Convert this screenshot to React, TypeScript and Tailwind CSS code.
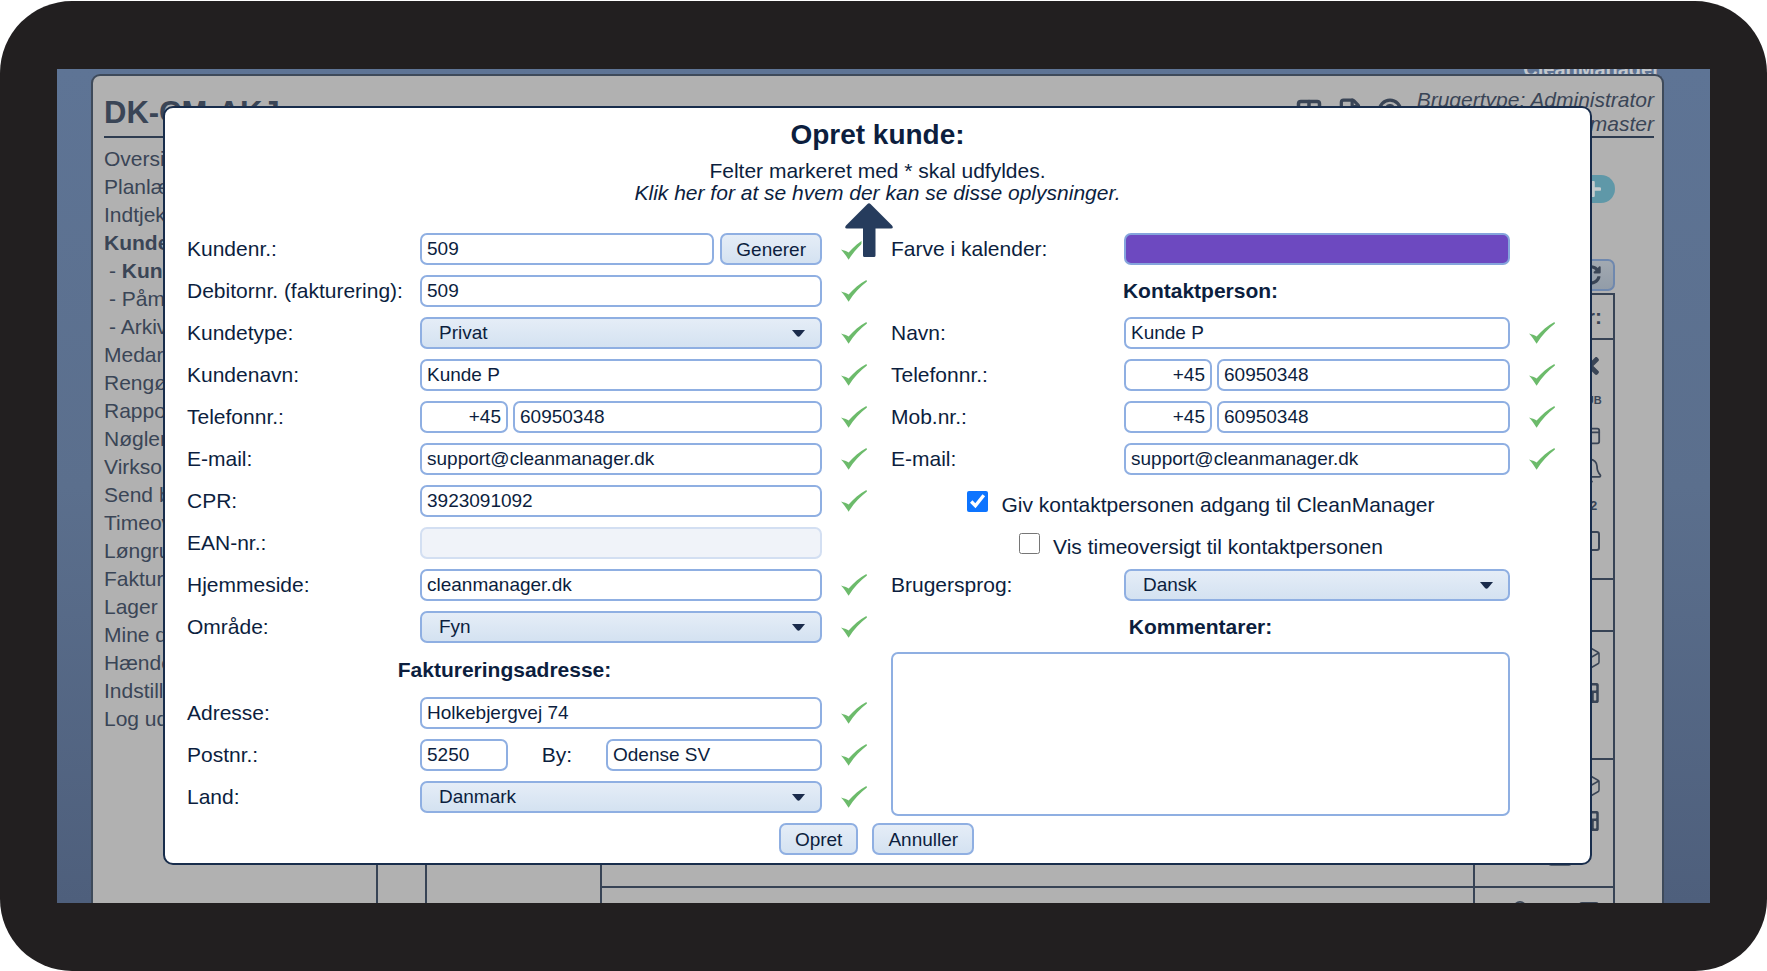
import React from "react";
import { Bell, Box, File, Table, CircleHelp, AppWindow, Square } from "lucide-react";
import { FaSyncAlt, FaTimes, FaCalculator } from "react-icons/fa";

const field =
  "h-8 min-w-0 rounded-[7px] border-2 border-[#8fafe2] bg-white px-[5px] text-[19px] text-[#0c1e3e] outline-none";
const buttonStyle =
  "h-8 shrink-0 rounded-[7px] border-2 border-[#8fafe2] bg-linear-to-b from-[#e5edf7] to-[#d4e2f1] px-[14px] text-[19px] leading-none text-[#0c1e3e]";

function CheckMark() {
  return (
    <svg viewBox="0 0 26 22" className="ml-[19px] h-[22px] w-[26px]" aria-hidden="true">
      <path d="M0 11.5C3 12.6 5.5 13 7.6 14.6C12.5 8.8 18.5 3.6 25.4 0L26 1.6C19 7 12.8 13.4 7.6 21.8C5.2 17.8 2.8 14.6 0 11.5Z" fill="#6cbb6b" />
    </svg>
  );
}

type RowProps = { label: string; id: string; check?: boolean; children: React.ReactNode };

function LeftRow({ label, id, check = true, children }: RowProps) {
  return (
    <div className="grid h-[42px] grid-cols-[233fr_402fr_69fr] items-center">
      <label htmlFor={id} className="whitespace-nowrap">{label}</label>
      <div className="flex min-w-0 items-center">{children}</div>
      {check && <CheckMark />}
    </div>
  );
}

function RightRow({ label, id, check = true, children }: RowProps) {
  return (
    <div className="grid h-[42px] grid-cols-[233fr_386fr_80fr] items-center">
      <label htmlFor={id} className="whitespace-nowrap">{label}</label>
      <div className="flex min-w-0 items-center">{children}</div>
      {check && <CheckMark />}
    </div>
  );
}

function TextField({ id, value }: { id: string; value: string }) {
  return <input id={id} type="text" defaultValue={value} className={`${field} w-full`} />;
}

function PhoneField({ id, name }: { id: string; name: string }) {
  return (
    <div className="flex w-full gap-[5px]">
      <input aria-label={`Landekode, ${name}`} type="text" defaultValue="+45" className={`${field} w-[88px] text-right`} />
      <input id={id} type="tel" defaultValue="60950348" className={`${field} flex-1`} />
    </div>
  );
}

function SelectField({ id, value }: { id: string; value: string }) {
  return (
    <div className="relative w-full">
      <select
        id={id}
        defaultValue={value}
        className="block h-8 w-full appearance-none rounded-[7px] border-2 border-[#8fafe2] bg-linear-to-b from-[#e5edf7] to-[#d4e2f1] pl-[17px] text-[19px] text-[#0c1e3e] outline-none"
      >
        <option>{value}</option>
      </select>
      <svg viewBox="0 0 13 7" className="pointer-events-none absolute top-[13px] right-[17px] h-[7px] w-[13px]" aria-hidden="true">
        <path d="M0 0H13L8 6Q6.500 7.500 5 6Z" fill="#1a2b4b" />
      </svg>
    </div>
  );
}

const menu = [
  "Oversigt", "Planlægning", "Indtjekning", "Kunder", "- Kunder", "- Påmindelser", "- Arkiv",
  "Medarbejdere", "Rengøring", "Rapporter", "Nøgler", "Virksomhed", "Send besked", "Timeoversigt",
  "Løngrundlag", "Fakturering", "Lager", "Mine data", "Hændelser", "Indstillinger", "Log ud",
];

function Sidebar() {
  return (
    <nav className="w-[272px] shrink-0 pt-[7px] text-[21px] leading-7">
      <ul>
        {menu.map((item, i) => (
          <li key={item} className={i === 3 ? "font-bold" : ""}>
            {item.startsWith("- ") ? (
              <a href="#" className="pl-[5px]">
                - <span className={i === 4 ? "font-bold" : ""}>{item.slice(2)}</span>
              </a>
            ) : (
              <a href="#">{item}</a>
            )}
          </li>
        ))}
      </ul>
    </nav>
  );
}

function IconSlot({ children }: { children: React.ReactNode }) {
  return <span className="flex h-[35px] w-7 items-center justify-center">{children}</span>;
}

function CustomerTable() {
  return (
    <div className="min-w-0 flex-1 pr-[47px]">
      <div className="flex h-[155px] flex-col items-end">
        <button aria-label="Tilføj" className="mt-[37px] flex h-7 w-11 shrink-0 items-center justify-center rounded-full bg-[#5f98a8]">
          <svg viewBox="0 0 16 16" className="h-4 w-4"><path d="M8 1.500V14.500M1.500 8H14.500" stroke="#c5cbcd" strokeWidth="3.600" strokeLinecap="round" /></svg>
        </button>
        <button aria-label="Opdater" className="mt-14 flex h-8 w-12 shrink-0 items-center justify-center rounded-[7px] border-2 border-[#6f88ae] bg-linear-to-b from-[#a2a9b1] to-[#929ca8]">
          <FaSyncAlt size={20} />
        </button>
      </div>
      <table className="w-full table-fixed border-collapse border-2 border-[#374355]">
        <colgroup>
          <col className="w-[49px]" />
          <col className="w-[175px]" />
          <col />
          <col className="w-[140px]" />
        </colgroup>
        <thead>
          <tr className="h-[45px]">
            <th className="border-2 border-[#374355]" />
            <th className="border-2 border-[#374355]" />
            <th className="border-2 border-[#374355]" />
            <th className="border-2 border-[#374355] pr-[11px] text-right text-[21px]">Funktioner:</th>
          </tr>
        </thead>
        <tbody>
          <tr className="h-[240px]">
            <td rowSpan={5} className="border-2 border-[#374355]" />
            <td rowSpan={5} className="border-2 border-[#374355]" />
            <td className="border-2 border-[#374355]" />
            <td className="border-2 border-[#374355] pt-2 pr-[9px] align-top">
              <div className="flex flex-col items-end">
                <IconSlot><FaTimes size={26} /></IconSlot>
                <IconSlot><span className="text-[11px] font-bold">SUB</span></IconSlot>
                <IconSlot><AppWindow size={22} strokeWidth={2} /></IconSlot>
                <IconSlot><Bell size={28} strokeWidth={1.5} /></IconSlot>
                <IconSlot><span className="text-[13px] font-bold">12</span></IconSlot>
                <IconSlot><Square size={24} strokeWidth={2} /></IconSlot>
              </div>
            </td>
          </tr>
          <tr className="h-[52px]">
            <td className="border-2 border-[#374355]" />
            <td className="border-2 border-[#374355]" />
          </tr>
          <tr className="h-32">
            <td className="border-2 border-[#374355]" />
            <td className="border-2 border-[#374355] pt-2 pr-[9px] align-top">
              <div className="flex flex-col items-end">
                <IconSlot><Box size={24} strokeWidth={1.5} /></IconSlot>
                <IconSlot><FaCalculator size={20} /></IconSlot>
              </div>
            </td>
          </tr>
          <tr className="h-32">
            <td className="border-2 border-[#374355]" />
            <td className="border-2 border-[#374355] pt-2 pr-[9px] align-top">
              <div className="flex flex-col items-end">
                <IconSlot><Box size={24} strokeWidth={1.5} /></IconSlot>
                <IconSlot><FaCalculator size={20} /></IconSlot>
                <span className="mr-[31px] flex h-[35px] items-center"><AppWindow size={26} strokeWidth={2} /></span>
              </div>
            </td>
          </tr>
          <tr className="h-20">
            <td className="border-2 border-[#374355]" />
            <td className="border-2 border-[#374355] pt-3 pr-3 align-top">
              <div className="flex justify-end gap-3">
                <Bell size={22} />
                <FaTimes size={22} />
                <Table size={24} />
              </div>
            </td>
          </tr>
        </tbody>
      </table>
    </div>
  );
}

function CustomerDialog() {
  return (
    <section role="dialog" aria-labelledby="dialog-title" className="min-w-0 flex-1 rounded-[10px] border-2 border-[#182d4c] bg-white pt-[10px] pb-2 pl-[22px] text-[21px] text-[#0c1e3e]">
      <header className="relative pr-[22px] text-center leading-[22px]">
        <h1 id="dialog-title" className="mb-2 text-[28px] leading-[34px] font-bold">Opret kunde:</h1>
        <p>Felter markeret med * skal udfyldes.</p>
        <a href="#" className="block italic">Klik her for at se hvem der kan se disse oplysninger.</a>
        <svg viewBox="0 0 52 58" className="pointer-events-none absolute top-[83px] left-[calc(50%-46px)] h-[58px] w-[52px]" aria-hidden="true">
          <path d="M24.500 3Q26 1.500 27.500 3L49 24.500Q51 27.500 48 27.500H32.500V54.500Q32.500 56 31 56H21.500Q20 56 20 54.500V27.500H4Q1 27.500 3 24.500Z" fill="#263c5d" stroke="#fff" strokeWidth="3" paintOrder="stroke" />
        </svg>
      </header>

      <form onSubmit={(e) => e.preventDefault()}>
        <div className="grid grid-cols-[704fr_699fr] pt-6">
          <div>
            <LeftRow label="Kundenr.:" id="kundenr">
              <div className="flex w-full gap-[6px]">
                <input id="kundenr" type="text" defaultValue="509" className={`${field} flex-1`} />
                <button type="button" className={buttonStyle}>Generer</button>
              </div>
            </LeftRow>
            <LeftRow label="Debitornr. (fakturering):" id="debitornr"><TextField id="debitornr" value="509" /></LeftRow>
            <LeftRow label="Kundetype:" id="kundetype"><SelectField id="kundetype" value="Privat" /></LeftRow>
            <LeftRow label="Kundenavn:" id="kundenavn"><TextField id="kundenavn" value="Kunde P" /></LeftRow>
            <LeftRow label="Telefonnr.:" id="telefon"><PhoneField id="telefon" name="telefon" /></LeftRow>
            <LeftRow label="E-mail:" id="email"><TextField id="email" value="support@cleanmanager.dk" /></LeftRow>
            <LeftRow label="CPR:" id="cpr"><TextField id="cpr" value="3923091092" /></LeftRow>
            <LeftRow label="EAN-nr.:" id="ean" check={false}>
              <input id="ean" type="text" disabled className="h-8 w-full rounded-[7px] border-2 border-[#d3dff2] bg-[#f0f3f9] px-[5px]" />
            </LeftRow>
            <LeftRow label="Hjemmeside:" id="hjemmeside"><TextField id="hjemmeside" value="cleanmanager.dk" /></LeftRow>
            <LeftRow label="Område:" id="omraade"><SelectField id="omraade" value="Fyn" /></LeftRow>
            <div className="grid h-11 grid-cols-[635fr_69fr] items-center text-center">
              <h2 className="font-bold">Faktureringsadresse:</h2>
            </div>
            <LeftRow label="Adresse:" id="adresse"><TextField id="adresse" value="Holkebjergvej 74" /></LeftRow>
            <LeftRow label="Postnr.:" id="postnr">
              <input id="postnr" type="text" defaultValue="5250" className={`${field} w-[88px]`} />
              <label htmlFor="by" className="w-[98px] text-center">By:</label>
              <input id="by" type="text" defaultValue="Odense SV" className={`${field} flex-1`} />
            </LeftRow>
            <LeftRow label="Land:" id="land"><SelectField id="land" value="Danmark" /></LeftRow>
          </div>

          <div>
            <RightRow label="Farve i kalender:" id="farve" check={false}>
              <button id="farve" type="button" aria-label="Vælg farve" className="h-8 w-full rounded-[7px] border-2 border-[#85a5dc] bg-[#6d49c0]" />
            </RightRow>
            <div className="grid h-[42px] grid-cols-[619fr_80fr] items-center text-center">
              <h2 className="font-bold">Kontaktperson:</h2>
            </div>
            <RightRow label="Navn:" id="kontakt-navn"><TextField id="kontakt-navn" value="Kunde P" /></RightRow>
            <RightRow label="Telefonnr.:" id="kontakt-telefon"><PhoneField id="kontakt-telefon" name="kontaktperson telefon" /></RightRow>
            <RightRow label="Mob.nr.:" id="kontakt-mobil"><PhoneField id="kontakt-mobil" name="kontaktperson mobil" /></RightRow>
            <RightRow label="E-mail:" id="kontakt-email"><TextField id="kontakt-email" value="support@cleanmanager.dk" /></RightRow>
            <div className="grid h-[42px] grid-cols-[619fr_80fr] items-center pt-2">
              <label className="flex items-baseline justify-center gap-3 whitespace-nowrap">
                <input type="checkbox" defaultChecked className="h-[21px] w-[23px] accent-[#0d74ff]" />
                Giv kontaktpersonen adgang til CleanManager
              </label>
            </div>
            <div className="grid h-[42px] grid-cols-[619fr_80fr] items-center pt-2">
              <label className="flex items-baseline justify-center gap-3 whitespace-nowrap">
                <input type="checkbox" className="h-[21px] w-[23px] accent-[#0d74ff]" />
                Vis timeoversigt til kontaktpersonen
              </label>
            </div>
            <RightRow label="Brugersprog:" id="sprog" check={false}><SelectField id="sprog" value="Dansk" /></RightRow>
            <div className="grid h-[42px] grid-cols-[619fr_80fr] items-center text-center">
              <label htmlFor="kommentarer" className="font-bold">Kommentarer:</label>
            </div>
            <div className="grid grid-cols-[619fr_80fr] pt-1">
              <textarea id="kommentarer" className="block h-[164px] w-full resize-none rounded-[7px] border-2 border-[#8fafe2] bg-white p-[5px] text-[19px] outline-none" />
            </div>
          </div>
        </div>
        <div className="flex justify-center gap-[14px] pt-[5px] pr-6">
          <button type="submit" className={buttonStyle}>Opret</button>
          <button type="button" className={buttonStyle}>Annuller</button>
        </div>
      </form>
    </section>
  );
}

export default function App() {
  return (
    <div className="h-screen bg-white pt-px font-['Liberation_Sans',Arial,sans-serif]">
      <div className="h-full rounded-[72px] bg-[#221f20] px-[57px] pt-[68px] pb-[68px]">
        <main className="relative h-full overflow-hidden bg-linear-to-b from-[#5e7495] via-[#5b6f8d] to-[#4e5f7c] text-[#3a4556]">
          <div className="flex h-full flex-col pr-[46px] pl-[34px]">
            <div className="flex h-[5px] shrink-0 items-end justify-end pr-1 text-[20px] leading-[10px] font-bold text-[#c3c7cc]">
              CleanManager
            </div>
            <div className="min-h-0 flex-1 overflow-hidden rounded-t-[9px] border-2 border-b-0 border-[#3e4a5a] bg-[#b1b1b1] pl-[11px]">
              <header className="mr-2 flex h-[62px] items-start justify-between border-b-2 border-[#2e3c50]">
                <p className="pt-5 text-[31px] leading-[34px] font-bold">DK-CM-AKJ</p>
                <div className="flex gap-[14px] text-[21px] leading-6 italic">
                  <div className="flex gap-[14px] pt-[22px]">
                    <Table size={28} strokeWidth={3} />
                    <File size={26} strokeWidth={3} />
                    <CircleHelp size={26} strokeWidth={3} />
                  </div>
                  <p className="pt-3 text-right">
                    Brugertype: Administrator
                    <br />
                    Bruger: master
                  </p>
                </div>
              </header>
              <div className="flex">
                <Sidebar />
                <CustomerTable />
              </div>
            </div>
          </div>
          <div className="absolute inset-0 flex items-start pt-[37px] pr-[118px] pl-[106px]">
            <CustomerDialog />
          </div>
        </main>
      </div>
    </div>
  );
}
